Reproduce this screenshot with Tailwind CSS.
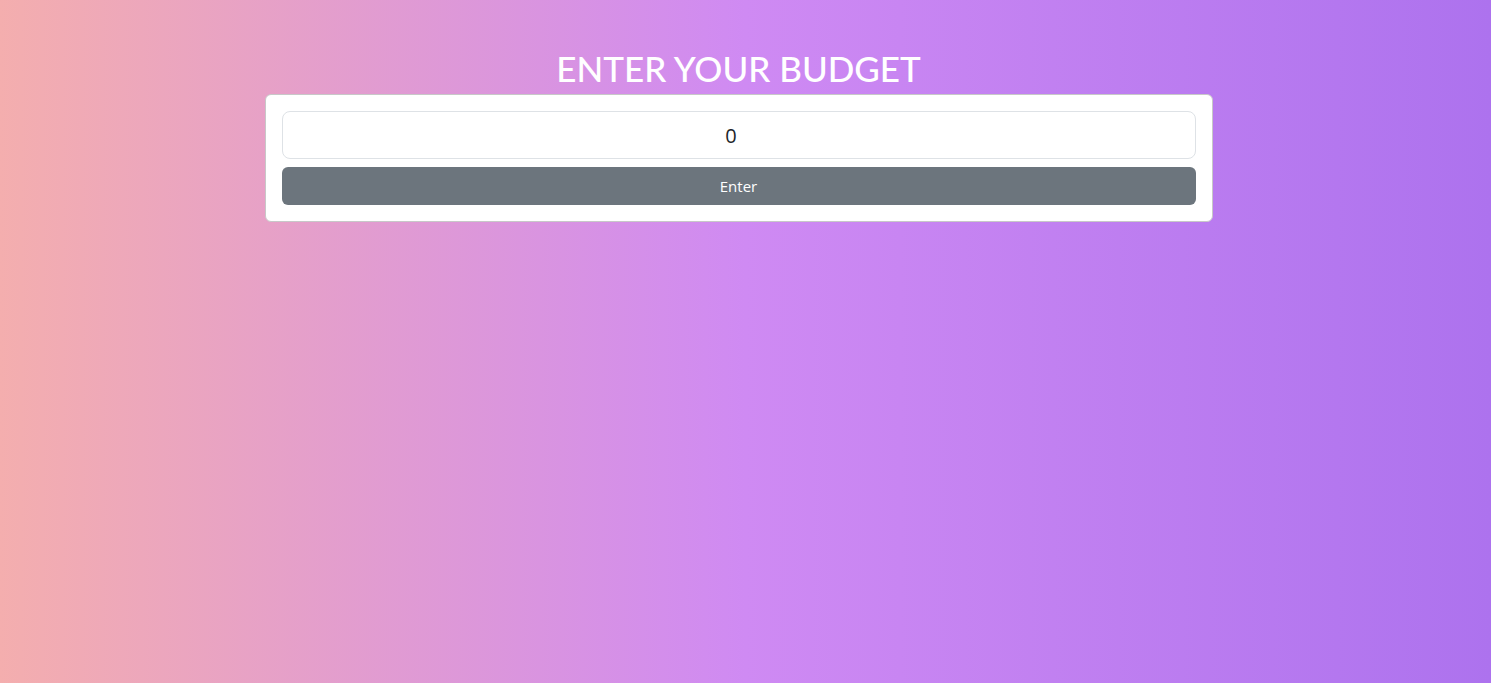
<!DOCTYPE html>
<html lang="en">
<head>
<meta charset="utf-8">
<meta name="viewport" content="width=device-width, initial-scale=1">
<title>Budget</title>
<script src="https://cdn.jsdelivr.net/npm/@tailwindcss/browser@4"></script>
</head>
<body class="min-h-screen bg-linear-to-r/srgb from-[#f4aeae] via-[#cf8af3] to-[#ad72ee] pr-[14px] font-['Open_Sans','Noto_Sans',sans-serif]">
<main class="mx-auto max-w-[948px] pt-11">
  <h1 class="mb-0.5 text-center font-['Lato',sans-serif] text-[35px] font-medium leading-[48px] text-white">ENTER YOUR BUDGET</h1>
  <form class="flex flex-col gap-2 rounded-md border border-[#c8c8c8] bg-white p-4">
    <input type="number" value="0" aria-label="Budget" class="h-12 w-full rounded-lg border border-[#dee2e6] bg-white px-4 py-2 text-center text-xl text-[#212529]">
    <button type="button" class="h-[38px] w-full rounded-md bg-[#6c757d] px-3 text-[15px] text-white">Enter</button>
  </form>
</main>
</body>
</html>
